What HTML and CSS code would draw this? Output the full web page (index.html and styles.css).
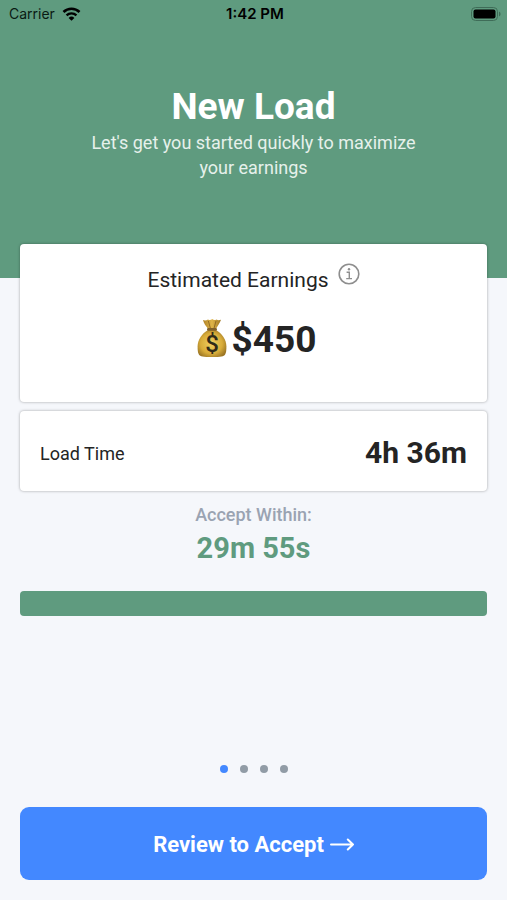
FILE: index.html
```
<!DOCTYPE html>
<html lang="en">
<head>
    <meta charset="UTF-8">
    <meta name="viewport" content="width=device-width, initial-scale=1.0">
    <title>New Load</title>
    <link rel="stylesheet" href="styles.css">
</head>
<body>
    <header class="hero">
        <div class="status-bar">
            <div class="carrier">
                <span>Carrier</span>
                <svg class="wifi" viewBox="0 0 20 15" aria-hidden="true">
                    <path d="M1.400 5.400a12.400 12.400 0 0 1 17.200 0" fill="none" stroke="#000" stroke-width="2.800"/>
                    <path d="M4.700 9a7.600 7.600 0 0 1 10.600 0" fill="none" stroke="#000" stroke-width="2.500"/>
                    <path d="M10 14.800 6.900 11.700a4.400 4.400 0 0 1 6.200 0z"/>
                </svg>
            </div>
            <div class="clock">1:42 PM</div>
            <svg class="battery" viewBox="0 0 30 14" aria-hidden="true">
                <rect x="0.5" y="0.5" width="26" height="13" rx="4" fill="none" stroke="#3f6c58"/>
                <rect x="2.5" y="2.5" width="22" height="9" rx="2"/>
                <path d="M28 4.6a2.6 2.6 0 0 1 0 4.8z" fill="#3f6c58"/>
            </svg>
        </div>
        <h1>New Load</h1>
        <p class="subtitle">Let's get you started quickly to maximize your earnings</p>
    </header>

    <main class="content">
        <section class="card earnings">
            <div class="earnings-title">
                <h2>Estimated Earnings</h2>
                <button type="button" class="info-btn" aria-label="Info">
                    <svg viewBox="0 0 22 22" fill="none" stroke="#8e8e8e" stroke-width="1.6">
                        <circle cx="11" cy="11" r="9.8"/>
                        <path d="M8.6 9.3h2.7v6.2M8.2 15.6h5.8" stroke-width="1.4"/>
                        <circle cx="11" cy="6.2" r="1.2" fill="#8e8e8e" stroke="none"/>
                    </svg>
                </button>
            </div>
            <div class="amount">
                <svg class="money-bag" viewBox="0 0 30 40" aria-hidden="true">
                    <defs>
                        <radialGradient id="bag" cx="0.48" cy="0.5" r="0.58">
                            <stop offset="0" stop-color="#f0d060"/>
                            <stop offset="0.65" stop-color="#d8ac3a"/>
                            <stop offset="1" stop-color="#9c7624"/>
                        </radialGradient>
                        <linearGradient id="neck" x1="0" x2="1">
                            <stop offset="0" stop-color="#b08329"/>
                            <stop offset="0.5" stop-color="#dfb448"/>
                            <stop offset="1" stop-color="#a07724"/>
                        </linearGradient>
                    </defs>
                    <path d="M6 2c2 .8 3.400.4 5-.6 1.500 1 2.800 1 4.200-.4 1.400 1.200 2.800 1.400 4.200.4 1.400.9 2.600.9 4.600.4-1.300 3.600-3.200 6.200-5.200 9.200h-7.600C9 8.200 6.600 5.200 6 2z" fill="url(#neck)"/>
                    <path d="M11.400 3l1.900 7M19 3l-1.900 7" stroke="#8a6420" stroke-width="0.9" fill="none"/>
                    <path d="M11 12C5 15.500.6 21.600.6 28.500c0 3 .1 6 1.400 8.200 1 1.600 4.300 2.300 13 2.300s12-.7 13-2.300c1.300-2.200 1.400-5.200 1.400-8.200C29.400 21.600 25 15.500 19 12z" fill="url(#bag)"/>
                    <rect x="10" y="10" width="10" height="2.800" rx="1.400" fill="#80602a"/>
                    <text x="15" y="34" text-anchor="middle" class="bag-sign">$</text>
                </svg>
                <span>$450</span>
            </div>
        </section>

        <section class="card load-time">
            <span class="label">Load Time</span>
            <span class="duration">4h 36m</span>
        </section>

        <section class="countdown">
            <p class="countdown-label">Accept Within:</p>
            <p class="countdown-time">29m 55s</p>
            <div class="bar"></div>
        </section>
    </main>

    <footer class="footer">
        <div class="dots">
            <span class="dot active"></span>
            <span class="dot"></span>
            <span class="dot"></span>
            <span class="dot"></span>
        </div>
        <button type="button" class="btn">
            <span>Review to Accept</span>
            <svg class="arrow" viewBox="0 0 24 14" fill="none" stroke="#fff" stroke-width="2" stroke-linecap="round" stroke-linejoin="round" aria-hidden="true">
                <path d="M1 6.500h22M17.800 1.500 23 6.500l-5.200 5"/>
            </svg>
        </button>
    </footer>
</body>
</html>
```
FILE: styles.css
```
* {
    margin: 0;
    padding: 0;
    box-sizing: border-box;
}

body {
    display: flex;
    flex-direction: column;
    min-height: 100vh;
    font-family: Roboto, 'Liberation Sans', sans-serif;
    background: #f5f7fb;
    color: #242424;
}

.hero {
    padding-bottom: 98px;
    background: #5f9b7f;
    color: #fff;
    text-align: center;
}

/* Status bar */
.status-bar {
    display: grid;
    grid-template-columns: 1fr auto 1fr;
    align-items: center;
    height: 27px;
    padding: 0 6px 0 9px;
    font-family: Inter, sans-serif;
    font-size: 14px;
    color: #0a1a13;
}

.carrier {
    display: flex;
    align-items: center;
    gap: 7px;
}

.wifi {
    width: 19px;
    height: 14px;
}

.clock {
    font-size: 15px;
    font-weight: 600;
    color: #000;
}

.battery {
    justify-self: end;
    width: 30px;
    height: 14px;
}

h1 {
    margin-top: 56px;
    font-size: 37px;
    line-height: 47px;
    font-weight: 700;
}

.subtitle {
    max-width: 350px;
    margin: 0 auto;
    font-size: 18px;
    line-height: 25px;
    color: #e6f1eb;
}

/* Cards */
.content {
    display: flex;
    flex-direction: column;
    gap: 9px;
    margin-top: -34px;
    padding: 0 20px;
}

.card {
    background: #fff;
    border-radius: 4px;
    box-shadow: 0 0 3px rgba(0, 0, 0, 0.35);
}

.earnings {
    padding: 19px 20px 39px;
}

.earnings-title {
    display: flex;
    justify-content: center;
    gap: 9px;
}

.earnings-title h2 {
    padding-top: 4px;
    font-size: 21px;
    line-height: 26px;
    font-weight: 400;
}

.info-btn {
    width: 22px;
    height: 22px;
    border: none;
    background: none;
    cursor: pointer;
}

.info-btn svg {
    display: block;
}

.amount {
    display: flex;
    align-items: center;
    justify-content: center;
    gap: 5px;
    margin-top: 24px;
    padding-left: 6px;
    font-size: 37px;
    line-height: 46px;
    font-weight: 700;
}

.money-bag {
    width: 30px;
    height: 40px;
    margin-bottom: 4px;
}

.bag-sign {
    font-size: 24px;
    font-weight: 500;
    fill: #302a18;
}

.load-time {
    display: flex;
    align-items: center;
    justify-content: space-between;
    padding: 22px 20px 18px;
}

.label {
    font-size: 18px;
}

.duration {
    font-size: 30px;
    line-height: 40px;
    font-weight: 700;
}

/* Countdown */
.countdown {
    padding-top: 2px;
    text-align: center;
}

.countdown-label {
    font-size: 18px;
    line-height: 26px;
    font-weight: 500;
    color: #9aa3b2;
}

.countdown-time {
    font-size: 29px;
    line-height: 40px;
    font-weight: 700;
    color: #5f9b7f;
}

.bar {
    height: 25px;
    margin-top: 23px;
    border-radius: 4px;
    background: #5f9b7f;
}

/* Footer */
.footer {
    margin-top: auto;
    padding: 20px;
}

.dots {
    display: flex;
    justify-content: center;
    gap: 12px;
    margin-bottom: 34px;
}

.dot {
    width: 8px;
    height: 8px;
    border-radius: 50%;
    background: #919ca6;
}

.dot.active {
    background: #4388ff;
}

.btn {
    display: flex;
    align-items: center;
    justify-content: center;
    gap: 6px;
    width: 100%;
    height: 73px;
    padding-top: 2px;
    border: none;
    border-radius: 9px;
    background: #4388ff;
    color: #fff;
    font-family: inherit;
    font-size: 22px;
    font-weight: 700;
    cursor: pointer;
}

.arrow {
    width: 24px;
    height: 14px;
}
```
